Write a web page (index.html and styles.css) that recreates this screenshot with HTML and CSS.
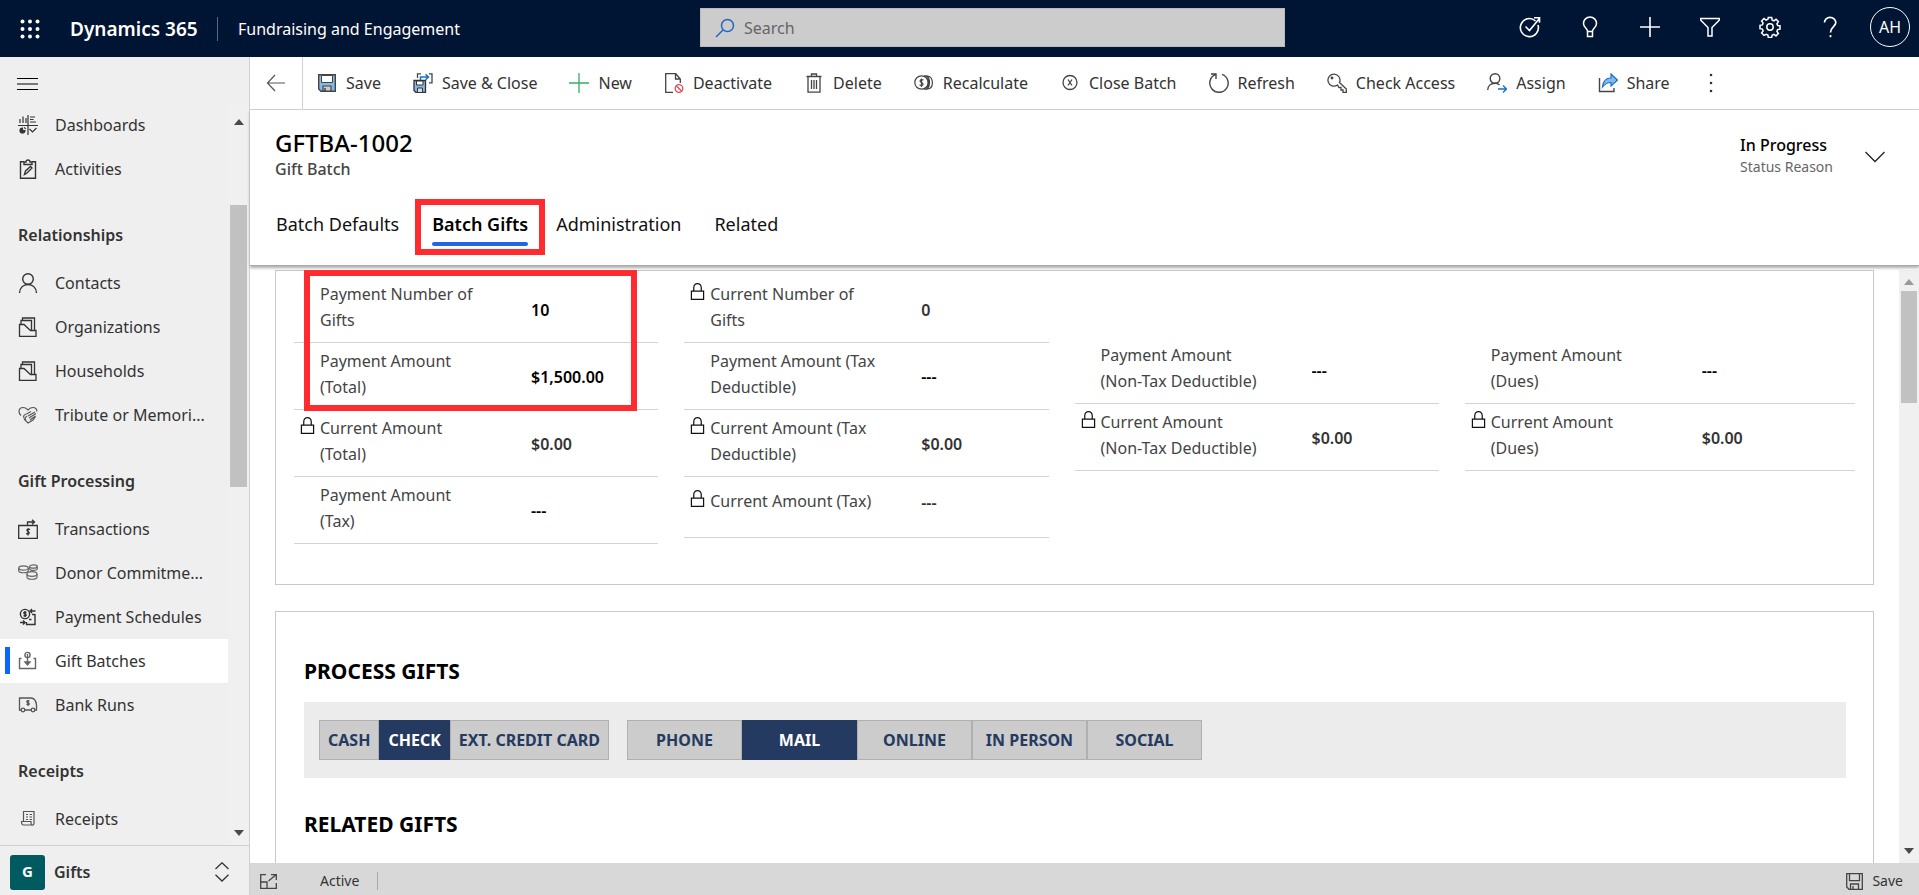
FILE: index.html
```html
<!DOCTYPE html>
<html lang="en">
<head>
<meta charset="utf-8">
<title>GFTBA-1002 - Dynamics 365</title>
<link rel="stylesheet" href="styles.css">
</head>
<body>
<svg class="sprite" aria-hidden="true">
  <symbol id="lock" viewBox="0 0 16 20"><path d="M1.5 9.5h13v9h-13zM4 9.500V6a4 4.500 0 0 1 8 0v3.500" fill="none" stroke="currentColor" stroke-width="1.300"/></symbol>
  <symbol id="folder" viewBox="0 0 20 20"><path d="M1.500 19.300V7.500h4.500l6.500 6h5.500v5.800zM3 7.500V3.500h10.500V14M4.500 3.500V1h12v12.500" fill="none" stroke="currentColor" stroke-width="1.300"/></symbol>
</svg>
<div class="app">
  <header class="topbar">
    <button class="plain waffle" aria-label="App launcher"><svg width="20" height="20" viewBox="0 0 20 20" fill="#fff"><circle cx="2.500" cy="2.500" r="2"/><circle cx="10" cy="2.500" r="2"/><circle cx="17.500" cy="2.500" r="2"/><circle cx="2.500" cy="10" r="2"/><circle cx="10" cy="10" r="2"/><circle cx="17.500" cy="10" r="2"/><circle cx="2.500" cy="17.500" r="2"/><circle cx="10" cy="17.500" r="2"/><circle cx="17.500" cy="17.500" r="2"/></svg></button>
    <a class="brand" href="#">Dynamics 365</a>
    <a class="appname" href="#">Fundraising and Engagement</a>
    <label class="search"><svg width="20" height="20" viewBox="0 0 20 20" fill="none" stroke="#2266c4" stroke-width="1.500"><circle cx="12.500" cy="7.500" r="6"/><path d="M8.200 11.800 1 19"/></svg><input type="search" placeholder="Search" aria-label="Search"></label>
    <div class="tools">
      <button class="plain" aria-label="Tasks"><svg width="22" height="22" viewBox="0 0 22 22" fill="none" stroke="#fff" stroke-width="1.600"><path d="M16.500 5A9 9 0 1 0 19 9M6.500 10.500l4 4L20 3M15 1.800h5.500v5"/></svg></button>
      <button class="plain" aria-label="Insights"><svg width="22" height="22" viewBox="0 0 22 22" fill="none" stroke="#fff" stroke-width="1.500"><path d="M8.500 15.500c0-3-4-4-4-8a6.500 6.500 0 0 1 13 0c0 4-4 5-4 8zM8.500 15.500v5h5v-5"/></svg></button>
      <button class="plain" aria-label="Quick create"><svg width="22" height="22" viewBox="0 0 22 22" fill="none" stroke="#fff" stroke-width="1.600"><path d="M11 1v20M1 11h20"/></svg></button>
      <button class="plain" aria-label="Filter"><svg width="22" height="22" viewBox="0 0 22 22" fill="none" stroke="#fff" stroke-width="1.500"><path d="M1.800 2.500h18.400v1.700L13 11.500V20H9v-8.500L1.800 4.200z"/></svg></button>
      <button class="plain" aria-label="Settings"><svg width="22" height="22" viewBox="0 0 22 22" fill="none" stroke="#fff" stroke-width="1.500"><circle cx="11" cy="11" r="3.200"/><path d="M9.300 1.500h3.400l.4 2.500 1.800.8 2.100-1.500 2.400 2.400-1.500 2.100.8 1.800 2.300.2v3.400l-2.400.4-.7 1.800 1.500 2.100-2.400 2.400-2.100-1.500-1.800.8-.4 2.300H9.300l-.4-2.400-1.800-.7L5 19.400 2.600 17l1.500-2.100-.7-1.800-2.400-.4V9.300l2.400-.4.7-1.800L2.600 5 5 2.600l2.100 1.500 1.800-.8z"/></svg></button>
      <button class="plain" aria-label="Help"><svg width="22" height="22" viewBox="0 0 22 22" fill="none" stroke="#fff" stroke-width="1.700"><path d="M5.500 6.500C5.500 3.500 8 1.300 11 1.300S16.800 3.500 16.800 6.500c0 4-5.300 4.500-5.300 10M11.500 19v2.300"/></svg></button>
      <button class="plain avatar">AH</button>
    </div>
  </header>

  <div class="body">
    <aside class="sidebar">
      <button class="plain menu" aria-label="Collapse site map"><svg width="22" height="12" viewBox="0 0 22 12"><path d="M0 .5h21M0 6h21M0 11.500h21" stroke="#000" stroke-width="1"/></svg></button>
      <div class="navwrap">
        <nav class="nav">
          <a href="#"><svg width="20" height="20" viewBox="0 0 20 20" fill="none" stroke="#333" stroke-width="1.200"><path d="M0 10.500h20M10 0v20M2 8V4M5 8V1.500M8 8V3M12 2h5M12 4.500h3.500M12 7h6M11.500 14l3 3 4-4"/><path d="M4.500 13A2.500 2.500 0 1 0 7 15.500H4.500zM6 12.500a2 2 0 0 1 1.500 1.500" fill="#333"/></svg>Dashboards</a>
          <a href="#"><svg width="20" height="20" viewBox="0 0 20 20" fill="none" stroke="#333" stroke-width="1.400"><path d="M6 2.800H2.500v16.500h15V2.800H14M6 5.500V3h2a2 2 0 0 1 4 0h2v2.500zM6.500 15.500l1-3.500 5-4.500 1.500 1.500-5 5z"/></svg>Activities</a>
          <h2>Relationships</h2>
          <a href="#"><svg width="20" height="20" viewBox="0 0 20 20" fill="none" stroke="#333" stroke-width="1.400"><circle cx="10" cy="6" r="5.300"/><path d="M1.500 20c0-5 3.700-8.500 8.500-8.500s8.500 3.500 8.500 8.500"/></svg>Contacts</a>
          <a href="#"><svg width="20" height="20"><use href="#folder"/></svg>Organizations</a>
          <a href="#"><svg width="20" height="20"><use href="#folder"/></svg>Households</a>
          <a href="#"><svg width="20" height="20" viewBox="0 0 20 20" fill="none" stroke="#555" stroke-width="1.200"><path d="M3 10.500C-.5 7 1 2.500 5 2.500c3 0 4 1.500 5 2.500 1-1 2-2.500 5-2.500 2.500 0 4 1.500 3.800 4M6 13c-1-2 .5-4 2.500-4L13 6.500M8 15c-2-1.500 0-3 1-4M6 14l4 4 5-3 2.500-3.500M10 11l7-4M11 13l7-4.500M12 15l5.500-4"/></svg>Tribute or Memori...</a>
          <h2>Gift Processing</h2>
          <a href="#"><svg width="20" height="20" viewBox="0 0 20 20" fill="none" stroke="#333" stroke-width="1.300"><path d="M.7 6.500h18.600v12.800H.7zM9.500 6V3h7M14 .8 16.500 3 14 5.200M12 10.500c-3-1.500-4 1-2 2s1.500 3.500-2 2M10 9.500v7"/></svg>Transactions</a>
          <a href="#"><svg width="20" height="20" viewBox="0 0 20 20" fill="none" stroke="#666" stroke-width="1.200"><ellipse cx="5.500" cy="5" rx="4.800" ry="2.200"/><path d="M.7 5v2.500c0 3 9.600 3 9.600 0V5"/><ellipse cx="15.500" cy="3.500" rx="3.800" ry="1.700"/><path d="M11.700 3.500v2.200c0 2.300 7.600 2.300 7.600 0V3.500"/><ellipse cx="14" cy="11" rx="5" ry="2.300"/><path d="M9 11v3c0 3 10 3 10 0v-3"/></svg>Donor Commitme...</a>
          <a href="#"><svg width="20" height="20" viewBox="0 0 20 20" fill="none" stroke="#333" stroke-width="1.400"><circle cx="7" cy="7" r="4.600"/><path d="M8.500 5.500c-3-1.200-3.500 1-1.500 1.500s1.500 2.500-1.500 1.500M7 4v6M12.500 4h5M14 2l-2 2 2 2M17 7.500h-3M17 7v10.500H8.500V15M2 15.500h5M5 13.500l2 2-2 2M11 12.500h2.500"/></svg>Payment Schedules</a>
          <a href="#" class="current" aria-current="page"><svg width="20" height="20" viewBox="0 0 20 20" fill="none" stroke="#666" stroke-width="1.400"><path d="M3.500 7.500h-2v10h16v-10h-2"/><circle cx="9.500" cy="4" r="2.600"/><path d="M9.500 3v9.500M7 11l2.500 3 2.500-3z" fill="#666"/></svg>Gift Batches</a>
          <a href="#"><svg width="20" height="20" viewBox="0 0 20 20" fill="none" stroke="#555" stroke-width="1.300"><path d="M3 15H1.500V3H13c3 0 5 3 5.500 7v5H17M7 15h6M11.500 6c-3-1-3.500 1.200-1.500 1.700s1.500 2.800-1.500 1.500M10 5v6"/><circle cx="5" cy="15" r="1.800"/><circle cx="15" cy="15" r="1.800"/></svg>Bank Runs</a>
          <h2>Receipts</h2>
          <a href="#"><svg width="20" height="20" viewBox="0 0 20 20" fill="none" stroke="#555" stroke-width="1.200"><path d="M5.500 12.500V2.500H16V14c0 3-3 2.500-3 0v-1.500H3.500c0 2.500.5 3.500 2 3.500h9M8 5.500h2M11.500 5.500H14M8 8h2M11.500 8H14M8 10.500h2M11.500 10.500H14"/></svg>Receipts</a>
        </nav>
        <div class="scroll" aria-hidden="true"><svg width="10" height="6"><path d="M0 6l5-6 5 6z" fill="#4a4a4a"/></svg><span class="thumb"></span><svg width="10" height="6"><path d="M0 0l5 6 5-6z" fill="#4a4a4a"/></svg></div>
      </div>
      <button class="plain area"><span class="badge">G</span><span class="areaname">Gifts</span><svg width="14" height="20" viewBox="0 0 14 20" fill="none" stroke="#333" stroke-width="1.300"><path d="M.5 7 7 .8 13.500 7M.5 12.800 7 19l6.500-6.200"/></svg></button>
    </aside>

    <main class="main">
      <div class="commands">
        <button class="plain back" aria-label="Back"><svg width="20" height="18" viewBox="0 0 20 18" fill="none" stroke="#555" stroke-width="1.200"><path d="M9 1 1.500 9 9 17M1.500 9H19"/></svg></button>
        <button class="plain"><svg width="20" height="20" viewBox="0 0 20 20"><path d="M1.700 1.700h16.600v16.600H4l-2.300-2.300z" fill="#83bbe8" stroke="#444" stroke-width="1.400"/><path d="M4.500 2.500h11v7h-11z" fill="#fff" stroke="#444"/><path d="M6 18v-5h8v5z" fill="#ccc" stroke="#444" stroke-width="1.200"/><path d="M8 15v3" stroke="#444" stroke-width="1.500"/></svg>Save</button>
        <button class="plain"><svg width="20" height="20" viewBox="0 0 20 20"><path d="M1 7.500h11.500v12H3l-2-2z" fill="#83bbe8" stroke="#333" stroke-width="1.300"/><path d="M3.500 8h6.500v4h-6.500z" fill="#fff" stroke="#333"/><path d="M4.500 19.500V15h5v4.500z" fill="#ddd" stroke="#333"/><path d="M4.500 5V.8H8M16 .8h3v9h-3" fill="none" stroke="#444" stroke-width="1.300"/><path d="M7.500 7V4H15M12.500 1.200 15.500 4l-3 2.800" fill="none" stroke="#1570c4" stroke-width="1.500"/></svg>Save &amp; Close</button>
        <button class="plain"><svg width="20" height="20" viewBox="0 0 20 20"><path d="M10 0v20M0 10h20" stroke="#36ad63" stroke-width="1.300"/></svg>New</button>
        <button class="plain"><svg width="20" height="20" viewBox="0 0 20 20" fill="none"><path d="M9 19.300H1.700V.7h10L16.300 6v4M11.500.8V6h5" stroke="#444" stroke-width="1.300"/><circle cx="15" cy="15.500" r="3.800" stroke="#e8464a" stroke-width="1.300"/><path d="m12.500 13 5 5" stroke="#e8464a" stroke-width="1.300"/></svg>Deactivate</button>
        <button class="plain"><svg width="20" height="20" viewBox="0 0 20 20" fill="none" stroke="#444" stroke-width="1.300"><path d="M2.500 3.500h15M4 3.500v15.700h12V3.500M7.500 3.500V1h5v2.500M7.500 7v9M10 7v9M12.500 7v9"/></svg>Delete</button>
        <button class="plain"><svg width="20" height="20" viewBox="0 0 20 20" fill="none" stroke="#444" stroke-width="1.200"><circle cx="7.500" cy="9.500" r="6.700"/><path d="M9.500 7c-3.500-1.500-4.500 1.500-2 2.500s2 4-2 2.500M7.500 5.500V14M11 2.800c6 .5 6 13 0 13.400M13.500 3c6.500 1 6.500 12.500 0 13M10 2.800h3.500M10 16.200h3.500M12.500 5c2.500 2 2.500 7.500 0 9.500"/></svg>Recalculate</button>
        <button class="plain"><svg width="20" height="20" viewBox="0 0 20 20" fill="none" stroke="#444" stroke-width="1.300"><circle cx="10" cy="9.500" r="7"/><path d="m8 6.500 4 6M12 6.500l-4 6"/></svg>Close Batch</button>
        <button class="plain"><svg width="20" height="20" viewBox="0 0 20 20" fill="none" stroke="#444" stroke-width="1.400"><path d="M13 1.400A9.200 9.200 0 1 1 6.200 1.700M2 1h5v5"/></svg>Refresh</button>
        <button class="plain"><svg width="20" height="20" viewBox="0 0 20 20" fill="none" stroke="#444" stroke-width="1.300"><path d="M10.500 12A6 6 0 1 1 12.500 9.500L19.300 16v3.300H16V17h-2v-2.500h-2z"/><circle cx="5" cy="5" r=".8"/></svg>Check Access</button>
        <button class="plain"><svg width="20" height="20" viewBox="0 0 20 20" fill="none" stroke="#444" stroke-width="1.400"><circle cx="8" cy="5.500" r="4.800"/><path d="M.7 17c0-4 3-6.700 7.300-6.700 2 0 3.500.7 4.500 1.700"/><path d="M11 16h8M16 12.500l3.500 3.500-3.500 3.500" stroke="#1570c4"/></svg>Assign</button>
        <button class="plain"><svg width="20" height="20" viewBox="0 0 20 20"><path d="M1.500 5v13.500H16V15" fill="none" stroke="#444" stroke-width="1.400"/><path d="M4.500 14c.5-6 3.500-9 8.500-9V1l6.500 6.200L13 13V9.500c-4 0-6 1-8.500 4.500z" fill="#83bbe8" stroke="#1570c4" stroke-width="1.200"/></svg>Share</button>
        <button class="plain more" aria-label="More commands"><svg width="4" height="20" fill="#333"><circle cx="2" cy="2" r="1.300"/><circle cx="2" cy="10" r="1.300"/><circle cx="2" cy="18" r="1.300"/></svg></button>
      </div>

      <section class="record">
        <div class="heading">
          <div class="title"><h1>GFTBA-1002</h1><p>Gift Batch</p></div>
          <div class="status"><strong>In Progress</strong><span>Status Reason</span></div>
          <button class="plain expand" aria-label="Expand header"><svg width="20" height="12" viewBox="0 0 20 12" fill="none" stroke="#222" stroke-width="1.300"><path d="M.5 1 10 10.500 19.500 1"/></svg></button>
        </div>
        <div class="tabs" role="tablist">
          <button class="plain" role="tab">Batch Defaults</button>
          <button class="plain active" role="tab" aria-selected="true">Batch Gifts</button>
          <button class="plain" role="tab">Administration</button>
          <button class="plain" role="tab">Related</button>
        </div>
      </section>

      <div class="formwrap">
        <div class="form">
          <section class="card fields">
            <div class="col">
              <div class="field"><label for="f1">Payment Number of Gifts</label><input id="f1" value="10"></div>
              <div class="field"><label for="f2">Payment Amount (Total)</label><input id="f2" value="$1,500.00"></div>
              <div class="field locked"><svg class="lock"><use href="#lock"/></svg><label for="f3">Current Amount (Total)</label><input id="f3" value="$0.00" readonly></div>
              <div class="field"><label for="f4">Payment Amount (Tax)</label><input id="f4" value="---"></div>
            </div>
            <div class="col">
              <div class="field locked"><svg class="lock"><use href="#lock"/></svg><label for="f5">Current Number of Gifts</label><input id="f5" value="0" readonly></div>
              <div class="field"><label for="f6">Payment Amount (Tax Deductible)</label><input id="f6" value="---"></div>
              <div class="field locked"><svg class="lock"><use href="#lock"/></svg><label for="f7">Current Amount (Tax Deductible)</label><input id="f7" value="$0.00" readonly></div>
              <div class="field locked short"><svg class="lock"><use href="#lock"/></svg><label for="f8">Current Amount (Tax)</label><input id="f8" value="---" readonly></div>
            </div>
            <div class="col offset">
              <div class="field"><label for="f9">Payment Amount<br>(Non-Tax Deductible)</label><input id="f9" value="---"></div>
              <div class="field locked"><svg class="lock"><use href="#lock"/></svg><label for="f10">Current Amount<br>(Non-Tax Deductible)</label><input id="f10" value="$0.00" readonly></div>
            </div>
            <div class="col offset">
              <div class="field"><label for="f11">Payment Amount (Dues)</label><input id="f11" value="---"></div>
              <div class="field locked"><svg class="lock"><use href="#lock"/></svg><label for="f12">Current Amount (Dues)</label><input id="f12" value="$0.00" readonly></div>
            </div>
            <span class="callout"></span>
          </section>
          <section class="card process">
            <h2>PROCESS GIFTS</h2>
            <div class="switches">
              <div class="group"><button>CASH</button><button class="on" aria-pressed="true">CHECK</button><button>EXT. CREDIT CARD</button></div>
              <div class="group wide"><button>PHONE</button><button class="on" aria-pressed="true">MAIL</button><button>ONLINE</button><button>IN PERSON</button><button>SOCIAL</button></div>
            </div>
            <h2>RELATED GIFTS</h2>
          </section>
        </div>
        <div class="scroll formscroll" aria-hidden="true"><svg width="10" height="6"><path d="M0 6l5-6 5 6z" fill="#999"/></svg><span class="thumb"></span><svg width="10" height="6"><path d="M0 0l5 6 5-6z" fill="#4a4a4a"/></svg></div>
      </div>

      <footer class="statusbar">
        <button class="plain" aria-label="Pop out"><svg width="17" height="15" viewBox="0 0 17 15" fill="none" stroke="#444" stroke-width="1.300"><path d="M6 .7H.7v13.600h15.600V9M.7 8H7v6M8.500 7l7.500-6.300M11 .7h5.300V6"/></svg></button>
        <span class="state">Active</span>
        <button class="plain save"><svg width="17" height="17" viewBox="0 0 17 17" fill="none" stroke="#444" stroke-width="1.300"><path d="M.7.700h15.600v15.600H3L.7 14zM3.500.7v7h10v-7M4.500 16v-5h8v5M7 13v3"/></svg>Save</button>
      </footer>
    </main>
  </div>
</div>
</body>
</html>
```

FILE: styles.css
```css
* { box-sizing: border-box; }
body { margin: 0; font: 16px/24px "Noto Sans", "Open Sans", sans-serif; color: #333; }
h1, h2, p { margin: 0; }
a { color: inherit; text-decoration: none; }
svg { flex: none; display: block; }
.sprite { position: absolute; width: 0; height: 0; }
.plain { display: flex; align-items: center; padding: 0; border: 0; background: none; color: inherit; font: inherit; white-space: nowrap; }
.app { height: 100vh; display: flex; flex-direction: column; overflow: hidden; }

.topbar { flex: none; height: 57px; display: grid; grid-template-columns: 20px 50px 147px minmax(0, 483fr) minmax(0, 585fr) minmax(0, 634fr); align-items: center; background: #001433; color: #fff; }
.waffle { grid-column: 2; }
.brand { font-weight: 600; font-size: 19px; }
.appname { padding-left: 20px; border-left: 1px solid #5a6780; }
.search { height: 39px; display: flex; align-items: center; gap: 9px; margin-bottom: 2px; padding: 0 14px; background: #ccc; border: 1px solid #bbb; }
.search input { flex: 1; min-width: 0; border: 0; padding: 0; background: none; outline: 0; font: inherit; color: #333; }
.search input::placeholder { color: #666; opacity: 1; }
.tools { display: flex; justify-content: flex-end; align-items: center; padding-right: 9px; margin-bottom: 4px; }
.tools button { width: 60px; justify-content: center; }
.tools .avatar { width: 40px; height: 40px; margin-left: 10px; border: 1px solid #fff; border-radius: 50%; }

.body { flex: 1; min-height: 0; display: flex; }
.sidebar { flex: none; width: 250px; display: flex; flex-direction: column; background: #efefef; border-right: 1px solid #d0d0d0; }
.menu { flex: none; height: 46px; padding: 8px 0 0 17px; }
.navwrap { flex: 1; min-height: 0; display: flex; overflow: hidden; border-bottom: 1px solid #d0d0d0; }
.nav { flex: 1; min-width: 0; }
.nav a { height: 44px; display: flex; align-items: center; gap: 17px; padding-left: 18px; white-space: nowrap; position: relative; }
.nav a.current { background: #fff; }
.nav a.current::before { content: ""; position: absolute; left: 5px; top: 8px; width: 5px; height: 27px; background: #0a66ff; }
.nav h2 { height: 44px; margin: 22px 0 4px; padding-left: 18px; font-size: 16px; font-weight: 600; line-height: 44px; }
.scroll { flex: none; width: 21px; display: flex; flex-direction: column; align-items: center; padding: 16px 0 9px; background: #f0f0f0; }
.scroll .thumb { width: 17px; height: 282px; margin: 80px 0 auto; background: #c1c1c1; }
.area { flex: none; height: 49px; padding: 3px 20px 0 10px; }
.badge { width: 35px; height: 35px; border-radius: 3px; background: #005b60; color: #fff; font-size: 15px; font-weight: 700; line-height: 33px; }
.areaname { flex: 1; padding-left: 9px; text-align: left; font-weight: 600; }

.main { flex: 1; min-width: 0; display: flex; flex-direction: column; }
.commands { flex: none; height: 53px; display: flex; align-items: stretch; gap: 32px; border-bottom: 1px solid #d2d2d2; }
.commands button { gap: 9px; }
.commands .back { width: 53px; margin-right: -18px; justify-content: center; border-right: 1px solid #d2d2d2; }
.commands .more { margin-left: 7px; }

.record { flex: none; height: 156px; padding: 19px 34px 0 25px; border-bottom: 1px solid #aaa; box-shadow: 0 2px 3px #aaa; position: relative; z-index: 1; background: #fff; }
.heading { display: flex; align-items: flex-start; }
.title { flex: 1; }
h1 { color: #000; font-size: 24px; line-height: 28px; font-weight: 500; }
.title p { color: #444; font-weight: 500; }
.status { display: flex; flex-direction: column; padding-top: 4px; margin-right: 32px; }
.status strong { color: #000; font-weight: 500; }
.status span { color: #666; font-size: 14px; line-height: 20px; }
.expand { height: 56px; }
.tabs { display: flex; gap: 33px; margin-top: 23px; padding-left: 1px; color: #111; font-size: 18px; line-height: 32px; }
.tabs .active { position: relative; margin-right: -5px; color: #000; font-weight: 600; }
.tabs .active::before { content: ""; position: absolute; left: 0; right: 0; bottom: -6px; height: 4px; border-radius: 2px; background: #2266e3; }
.tabs .active::after { content: ""; position: absolute; inset: -9px -17px -15px -17px; border: 6px solid #ff2b2f; }

.formwrap { flex: 1; min-height: 0; display: flex; overflow: hidden; padding-top: 4px; }
.form { flex: 1; min-width: 0; padding: 0 25px; }
.formscroll { width: 20px; padding-top: 9px; }
.formscroll .thumb { width: 16px; height: 112px; margin-top: 6px; }
.card { position: relative; border: 1px solid #c8c8c8; }
.fields { display: grid; grid-template-columns: repeat(4, 1fr); height: 315px; padding: 5px 18px 0; }
.col { padding-right: 26px; }
.col:nth-child(4) { padding-right: 0; }
.offset { padding-top: 61px; }
.field { position: relative; height: 67px; display: grid; grid-template-columns: 168px 1fr; column-gap: 43px; align-items: start; padding: 5px 0 0 26px; border-bottom: 1px solid #d4d4d4; line-height: 26px; color: #444; }
.field input { width: 100%; height: 26px; margin-top: 16px; padding: 0; border: 0; background: none; color: #000; font: inherit; font-weight: 600; }
.field.locked input { color: #333; }
.field.short { height: 61px; padding-top: 11px; }
.field.short input { margin-top: 2px; }
.lock { position: absolute; left: 6px; top: 6px; width: 15px; height: 19px; color: #111; }
.short .lock { top: 12px; }
.callout { position: absolute; left: 28px; top: -1px; width: 333px; height: 141px; border: 6px solid #ff2b2f; }
.process { height: 330px; margin-top: 26px; padding: 44px 27px 0 28px; }
.process h2 { color: #000; font-size: 21px; line-height: 30px; font-weight: 700; }
.switches { display: flex; gap: 18px; margin: 16px 0 31px; padding: 18px 15px; background: #ececec; }
.group { display: flex; }
.group button { height: 40px; padding: 0 8px; border: 1px solid #b0b0b0; background: #ccc; color: #253a60; font: 700 16px/24px "Noto Sans", "Open Sans", sans-serif; }
.wide button { width: 115px; }
.group .on { background: #253a60; border-color: #253a60; color: #fff; }

.statusbar { flex: none; height: 32px; display: flex; align-items: center; padding: 4px 16px 0 10px; background: #d8d8d8; font-size: 14px; position: relative; z-index: 1; }
.state { margin-left: 43px; padding-right: 18px; border-right: 1px solid #aaa; line-height: 18px; }
.save { margin-left: auto; gap: 9px; }
```
